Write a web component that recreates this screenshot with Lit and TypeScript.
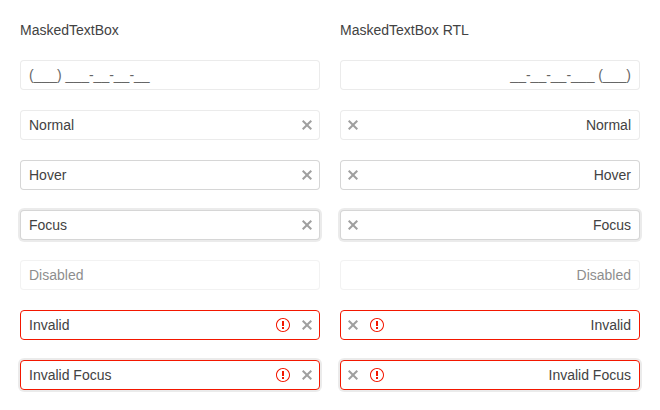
import { LitElement, html, css, nothing } from "lit";
import { customElement, property } from "lit/decorators.js";
import { classMap } from "lit/directives/class-map.js";

type Status = "empty" | "normal" | "hover" | "focus" | "disabled" | "invalid" | "invalid-focus";

interface Field {
  text: string;
  status: Status;
}

const FIELDS: Field[] = [
  { text: "(___) ___-__-__-__", status: "empty" },
  { text: "Normal", status: "normal" },
  { text: "Hover", status: "hover" },
  { text: "Focus", status: "focus" },
  { text: "Disabled", status: "disabled" },
  { text: "Invalid", status: "invalid" },
  { text: "Invalid Focus", status: "invalid-focus" },
];

@customElement("masked-textbox")
export class MaskedTextbox extends LitElement {
  @property() text = "";
  @property() status: Status = "normal";

  static styles = css`
    :host {
      display: block;
    }
    .box {
      box-sizing: border-box;
      display: flex;
      align-items: center;
      height: 30px;
      border: 1px solid rgba(0, 0, 0, 0.08);
      border-radius: 4px;
      background: #fff;
      color: #424242;
    }
    .value {
      flex: 1;
      padding: 4px 8px;
      line-height: 20px;
      white-space: pre;
    }
    .empty .value {
      color: #666;
    }
    .hover,
    .focus {
      border-color: rgba(0, 0, 0, 0.16);
    }
    .focus,
    .invalid-focus {
      box-shadow: 0 0 0 2px rgba(0, 0, 0, 0.08);
    }
    .disabled {
      opacity: 0.6;
    }
    .invalid,
    .invalid-focus {
      border-color: #f31700;
    }
    .icon {
      display: flex;
      width: 16px;
      height: 16px;
      padding: 0 4px;
      fill: currentColor;
    }
    .error {
      color: #f31700;
    }
    .clear {
      opacity: 0.5;
    }
  `;

  render() {
    const invalid = this.status.startsWith("invalid");
    const clearable = this.status !== "empty" && this.status !== "disabled";
    return html`
      <div class=${classMap({ box: true, [this.status]: true })}>
        <span class="value">${this.text}</span>
        ${invalid
          ? html`<span class="icon error">
              <svg width="16" height="16" viewBox="0 0 512 512">
                <path
                  d="M256 32C132.3 32 32 132.3 32 256s100.3 224 224 224 224-100.3 224-224S379.7 32 256 32zm0 416c-106 0-192-86-192-192S150 64 256 64s192 86 192 192-86 192-192 192zm-32-320h64v160h-64V128zm0 192h64v64h-64v-64z"
                />
              </svg>
            </span>`
          : nothing}
        ${clearable
          ? html`<span class="icon clear">
              <svg width="16" height="16" viewBox="0 0 512 512">
                <path
                  d="M416 141.3 301.3 256 416 370.7 370.7 416 256 301.3 141.3 416 96 370.7 210.7 256 96 141.3 141.3 96 256 210.7 370.7 96z"
                />
              </svg>
            </span>`
          : nothing}
      </div>
    `;
  }
}

@customElement("app-root")
export class AppRoot extends LitElement {
  static styles = css`
    :host {
      display: block;
      box-sizing: border-box;
      padding: 20px;
      font: 14px/20px "Liberation Sans", Arial, sans-serif;
      color: #424242;
      background: #fff;
    }
    .columns {
      display: grid;
      grid-template-columns: 300px 300px;
      gap: 20px;
    }
    .column {
      display: flex;
      flex-direction: column;
      gap: 20px;
    }
  `;

  private column(title: string, dir: "ltr" | "rtl") {
    return html`
      <section class="column">
        <span>${title}</span>
        ${FIELDS.map(
          (f) => html`<masked-textbox dir=${dir} .text=${f.text} .status=${f.status}></masked-textbox>`
        )}
      </section>
    `;
  }

  render() {
    return html`
      <main class="columns">
        ${this.column("MaskedTextBox", "ltr")} ${this.column("MaskedTextBox RTL", "rtl")}
      </main>
    `;
  }
}
